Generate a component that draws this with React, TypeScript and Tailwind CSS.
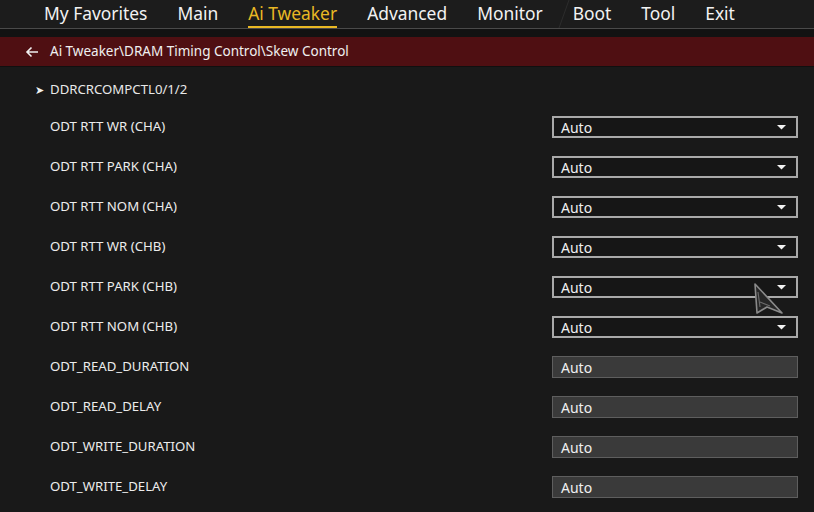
import type { ReactNode } from "react";

const menu = ["My Favorites", "Main", "Ai Tweaker", "Advanced", "Monitor", "Boot", "Tool", "Exit"];

type Row = { label: string; kind: "select" | "input" };

const rows: Row[] = [
  { label: "ODT RTT WR (CHA)", kind: "select" },
  { label: "ODT RTT PARK (CHA)", kind: "select" },
  { label: "ODT RTT NOM (CHA)", kind: "select" },
  { label: "ODT RTT WR (CHB)", kind: "select" },
  { label: "ODT RTT PARK (CHB)", kind: "select" },
  { label: "ODT RTT NOM (CHB)", kind: "select" },
  { label: "ODT_READ_DURATION", kind: "input" },
  { label: "ODT_READ_DELAY", kind: "input" },
  { label: "ODT_WRITE_DURATION", kind: "input" },
  { label: "ODT_WRITE_DELAY", kind: "input" },
];

function Field({ kind, children }: { kind: Row["kind"]; children: ReactNode }) {
  if (kind === "select") {
    return (
      <div className="flex h-[22px] w-[246px] items-center justify-between border-2 border-[#a9a9a9] bg-[#161616] pl-[7px] pr-[10px]">
        <span className="text-[14px] text-[#f0f0f0]">{children}</span>
        <svg width="9" height="5" viewBox="0 0 9 5" aria-hidden>
          <polygon points="0,0 9,0 4.5,4.5" fill="#f2f2f2" />
        </svg>
      </div>
    );
  }
  return (
    <div className="flex h-[22px] w-[246px] items-center border border-[#5e5e5e] bg-[#3a3a3a] pl-[8px]">
      <span className="text-[14px] text-[#f0f0f0]">{children}</span>
    </div>
  );
}

export default function App() {
  return (
    <div
      className="relative h-[512px] w-[814px] overflow-hidden bg-[#191919] text-[#e8e8e8]"
      style={{ fontFamily: '"Noto Sans", "Open Sans", sans-serif' }}
    >
      {/* top menu */}
      <div className="relative flex h-[29px] items-center border-b border-[#4a4a4a] bg-[#1c1c1c] pl-[44px]">
        {menu.map((m) => (
          <span
            key={m}
            className={`mr-[30px] text-[17.4px] leading-[26px] ${
              m === "Ai Tweaker"
                ? "border-b-2 border-[#e9b824] text-[#e9b824]"
                : "border-b-2 border-transparent text-[#f2f2f2]"
            }`}
          >
            {m}
          </span>
        ))}
        <svg className="absolute left-[558px] top-0" width="12" height="28" aria-hidden>
          <line x1="11" y1="0" x2="1" y2="28" stroke="#2c2c2c" strokeWidth="1" />
        </svg>
      </div>
      <div className="h-[8px] bg-[#121212]" />

      {/* breadcrumb */}
      <div className="flex h-[29px] items-center bg-[#4f0f12] pl-[25px] text-[13.5px] text-[#f0f0f0]">
        <svg width="14" height="12" viewBox="0 0 14 12" className="mr-[11px]" aria-hidden>
          <path d="M13 6H2M6.5 1.5L2 6l4.5 4.5" fill="none" stroke="#f0f0f0" strokeWidth="1.6" />
        </svg>
        <span>Ai Tweaker\DRAM Timing Control\Skew Control</span>
      </div>
      <div className="h-[1px] bg-[#101010]" />

      {/* items */}
      <div className="pt-[9px]">
        <div className="flex h-[28px] items-center pl-[35px] text-[13.2px]">
          <span className="w-[15px] text-[11px] text-[#f0f0f0]">➤</span>
          <span>DDRCRCOMPCTL0/1/2</span>
        </div>
        <div className="mt-[3px] flex flex-col">
          {rows.map((r) => (
            <div key={r.label} className="flex h-[40px] items-center justify-between pl-[50px] pr-[16px]">
              <span className="text-[13.2px] text-[#ececec]">{r.label}</span>
              <Field kind={r.kind}>Auto</Field>
            </div>
          ))}
        </div>
      </div>

      {/* mouse cursor */}
      <svg className="absolute left-[752px] top-[282px]" width="32" height="34" viewBox="0 0 32 34" aria-hidden>
        <polygon points="3,2 30,31 15,25 5,31" fill="#262626" stroke="#8a8a8a" strokeWidth="1.6" strokeLinejoin="round" />
        <path d="M6,10 L8,25 M8,20 L18,24" fill="none" stroke="#6a6a6a" strokeWidth="1.2" />
      </svg>
    </div>
  );
}
